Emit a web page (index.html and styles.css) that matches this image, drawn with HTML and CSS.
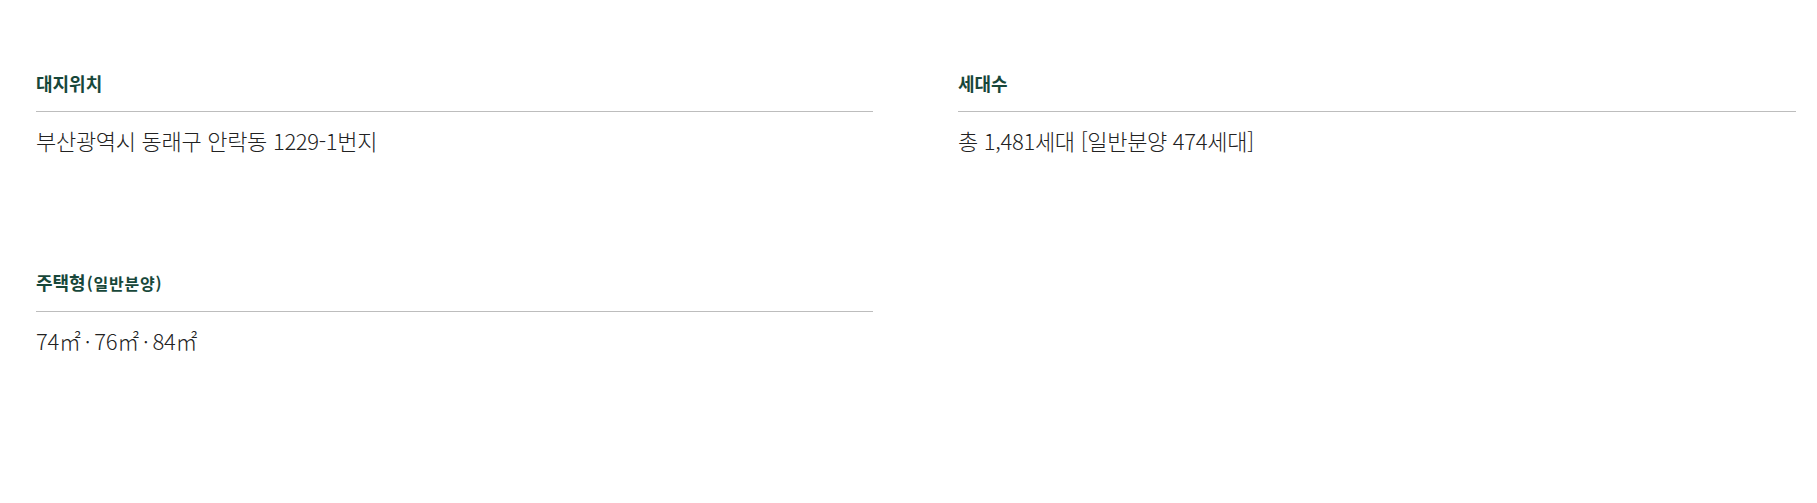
FILE: index.html
```html
<!DOCTYPE html>
<html lang="ko">
<head>
<meta charset="utf-8">
<link rel="stylesheet" href="styles.css">
</head>
<body>
<div class="info">
  <div class="item">
    <div class="label">대지위치</div>
    <div class="value">부산광역시 동래구 안락동 1229-1번지</div>
  </div>
  <div class="item">
    <div class="label">세대수</div>
    <div class="value">총 1,481세대 [일반분양 474세대]</div>
  </div>
  <div class="item">
    <div class="label">주택형<span class="sub">(일반분양)</span></div>
    <div class="value">74㎡<span class="dot">·</span>76㎡<span class="dot">·</span>84㎡</div>
  </div>
</div>
</body>
</html>
```
FILE: styles.css
```css
html, body {
  margin: 0;
  padding: 0;
  background: #fff;
}
body {
  font-family: "Noto Sans CJK KR", "Noto Sans", sans-serif;
  color: #222;
}
.info {
  display: grid;
  grid-template-columns: 837px 838px;
  column-gap: 85px;
  row-gap: 114px;
  padding: 70px 0 0 36px;
}
.label {
  font-size: 18px;
  font-weight: 700;
  color: #17473a;
  line-height: 26px;
  padding-bottom: 15px;
  border-bottom: 1px solid #bdbdbd;
}
.sub {
  font-size: 16px;
  margin-left: 1px;
  letter-spacing: 0.8px;
}
.value {
  font-size: 22px;
  font-weight: 300;
  line-height: 30px;
  padding-top: 13px;
  letter-spacing: -0.3px;
}
.dot {
  margin: 0 1px;
}
```
